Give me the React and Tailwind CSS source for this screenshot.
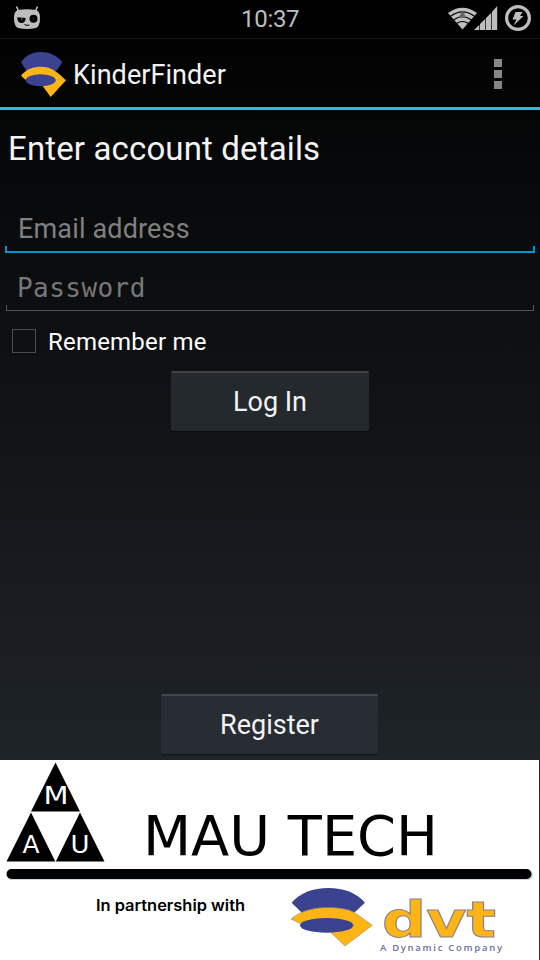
function Swoosh({ className }) {
  return (
    <svg className={className} viewBox="63 156 135 135" preserveAspectRatio="none">
      <path d="M63 187 C80 163 100 156 123 156 S170 165 187 187 L170 212 H79Z" fill="#3b4290" />
      <path d="M63 227 C80 206 100 200 123 200 C155 200 175 218 198 241 L152 291 L128 258 L120 240 L76 239Z" fill="#fdb515" />
      <ellipse cx="122" cy="241" rx="45" ry="18" fill="#3b4290" />
    </svg>
  );
}

function StatusBar() {
  return (
    <div className="flex h-[38px] shrink-0 items-start bg-black text-[#bebebe]">
      <svg className="ml-3.5 mt-1.5 h-[23px] w-[26px]" viewBox="0 0 26 23">
        <path d="M2.500 .5 L4.500 5 M23.500 .5 L21.500 5" stroke="#bebebe" strokeWidth="1.600" />
        <path d="M4 4 Q13 2.500 22 4 Q26 5 26 12 Q26 20 22 22 Q13 24 4 22 Q0 20 0 12 Q0 5 4 4Z" fill="#bebebe" />
        <path d="M3.200 11.200 L11.700 12 Q11.500 17 7.500 17 Q3.500 17 3.200 11.200Z" fill="#000" />
        <circle cx="19.500" cy="12.800" r="4" fill="#000" />
        <rect x="7" y="12.500" width="1.300" height="1.100" fill="#999" />
        <rect x="19" y="12.300" width="1" height="1" fill="#777" />
        <path d="M10.500 18.500 Q13 20 15.500 19" stroke="#000" fill="none" />
      </svg>
      <div className="ml-[201px] w-[60px] pt-1 font-['Roboto',sans-serif] text-[24px] leading-[31px] tracking-[-0.3px]">10:37</div>
      <div className="ml-auto mr-[9px] flex pt-[4px]">
        <svg className="h-[28px] w-[50px]" viewBox="0 0 50 28">
          <path d="M0 9 Q14.500 -1.500 29 9 L14.500 25.500Z" fill="#bebebe" />
          <path d="M2.500 12.300 Q14.500 3.500 26.500 12.300 M5.500 16 Q14.500 9.500 23.500 16 M8.500 19.500 Q14.500 15.500 20.500 19.500" stroke="#000" strokeWidth="1.100" fill="none" />
          <path d="M14.500 6.500 L18.300 13.500 H10.700Z" fill="#666" />
          <path d="M26 26 L31.300 20.700 V26Z M32 20 L37.300 14.700 V26 H32Z M38 14 L43.300 8.700 V26 H38Z M44 8 L49.200 2 V26 H44Z" fill="#bebebe" />
        </svg>
        <svg className="ml-[6px] h-[28px] w-[27px]" viewBox="0 0 27 28">
          <circle cx="14" cy="14" r="11.400" fill="none" stroke="#bebebe" strokeWidth="3.200" />
          <path d="M11.500 8 H18.500 L16 12 H19.500 L9.500 21.500 L12.500 15.500 H8.500Z" fill="#bebebe" />
        </svg>
      </div>
    </div>
  );
}

function ActionBar() {
  return (
    <header className="flex h-[72px] shrink-0 items-start border-t border-b-[3px] border-t-[#151515] border-b-[#33b5e5]">
      <Swoosh className="ml-[21px] mt-[13px] h-[45px] w-[45px]" />
      <h1 className="ml-[7px] mt-[20px] whitespace-nowrap text-[27px] leading-8 tracking-[0.06px]">KinderFinder</h1>
      <div className="ml-auto mr-[38px] mt-[20px] flex flex-col gap-[3px]">
        <span className="size-2 bg-[#868686]" />
        <span className="size-2 bg-[#868686]" />
        <span className="size-2 bg-[#868686]" />
      </div>
    </header>
  );
}

function Banner() {
  return (
    <footer className="mr-px h-[200px] shrink-0 bg-white">
      <svg className="h-[200px] w-[539px]" viewBox="0 0 539 200">
        <path d="M55.500 2.500 L80 51.500 H31Z M31 52.500 L55.300 101.500 H6.500Z M80 52.500 L104.500 101.500 H55.800Z" fill="#000" />
        <g fill="#fff" fontFamily="DejaVu Sans, sans-serif" fontSize="24">
          <text x="43.500" y="43.500" textLength="25" lengthAdjust="spacingAndGlyphs">M</text>
          <text x="22.500" y="93" textLength="17" lengthAdjust="spacingAndGlyphs">A</text>
          <text x="70.500" y="92.500" textLength="19" lengthAdjust="spacingAndGlyphs">U</text>
        </g>
        <text x="143" y="95" fontFamily="DejaVu Sans, sans-serif" fontSize="55.500" textLength="295" lengthAdjust="spacingAndGlyphs">MAU TECH</text>
        <rect x="7" y="111" width="526" height="9" rx="4.500" fill="#c9d9ea" />
        <rect x="6.500" y="109" width="525" height="10" rx="5" fill="#000" />
        <text x="96" y="151" fontFamily="Inter, sans-serif" fontWeight="600" fontSize="15.500" textLength="149" lengthAdjust="spacingAndGlyphs">In partnership with</text>
        <text x="382" y="177" fontFamily="DejaVu Sans, sans-serif" fontWeight="700" fontSize="50" fill="#fdb515" stroke="#8f8088" strokeWidth="1" textLength="114" lengthAdjust="spacingAndGlyphs">dvt</text>
        <text x="380" y="190.500" fontFamily="Open Sans, sans-serif" fontWeight="600" fontSize="9.500" fill="#6a70a6" textLength="122">A Dynamic Company</text>
        <g transform="translate(285 120) scale(0.3333)">
          <path d="M20 68 C45 38 85 24 130 24 S215 38 240 68 L206 100 H52Z" fill="#3b4290" />
          <path d="M18 117 C50 90 90 83 130 83 C170 83 200 90 215 102 L262 136 L180 198 L138 158 L125 136 L47 131Z" fill="#fdb515" stroke="#a8926a" strokeWidth="2" />
          <ellipse cx="125" cy="136" rx="80" ry="22" fill="#3b4290" />
        </g>
      </svg>
    </footer>
  );
}

const buttonClass =
  "mx-auto block h-[60px] shrink-0 rounded-[2px] border-t-2 pb-px text-[27px] leading-8 text-[#f3f3f3] shadow-[0_1px_1px_rgba(0,0,0,0.4)]";

export default function App() {
  return (
    <main className="flex h-[960px] w-[540px] flex-col overflow-hidden bg-[linear-gradient(to_bottom,#000000,#272d33)] font-['Roboto',sans-serif] text-[#f3f3f3]">
      <StatusBar />
      <ActionBar />
      <section className="flex h-[650px] shrink-0 flex-col">
        <h2 className="ml-2 mt-[19px] h-10 whitespace-nowrap text-[33px] leading-10 tracking-[0.14px]">Enter account details</h2>
        <div className="mx-[5px] mt-[33px] h-[51px]">
          <div className="h-[44px] pl-[13px] pt-[11px] text-[27px] leading-8 tracking-[0.15px] text-[#808080]">Email address</div>
          <div className="h-[7px] border-x-2 border-b-2 border-[#0099cc]" />
        </div>
        <div className="mx-[6px] mt-[10px] h-[48px]">
          <div className="h-[42px] pl-[11px] pt-[9px] font-['DejaVu_Sans_Mono',monospace] text-[26px] leading-8 tracking-[0.45px] text-[#777]">Password</div>
          <div className="h-[6px] border-x border-b border-[#555]" />
        </div>
        <label className="ml-3 mt-[14px] flex h-8 items-center text-[24px] leading-8 tracking-[0.2px] text-white">
          <span className="mr-3 size-[24px] border border-[#4a4c4e]" />
          <span className="pt-px">Remember me</span>
        </label>
        <button className={`${buttonClass} mt-[14px] w-[198px] border-[#414446] bg-[#24292d]`}>Log In</button>
        <button className={`${buttonClass} mb-[6px] ml-[161px] mt-auto w-[217px] border-[#43474b] bg-[#282d33]`}>Register</button>
      </section>
      <Banner />
    </main>
  );
}
